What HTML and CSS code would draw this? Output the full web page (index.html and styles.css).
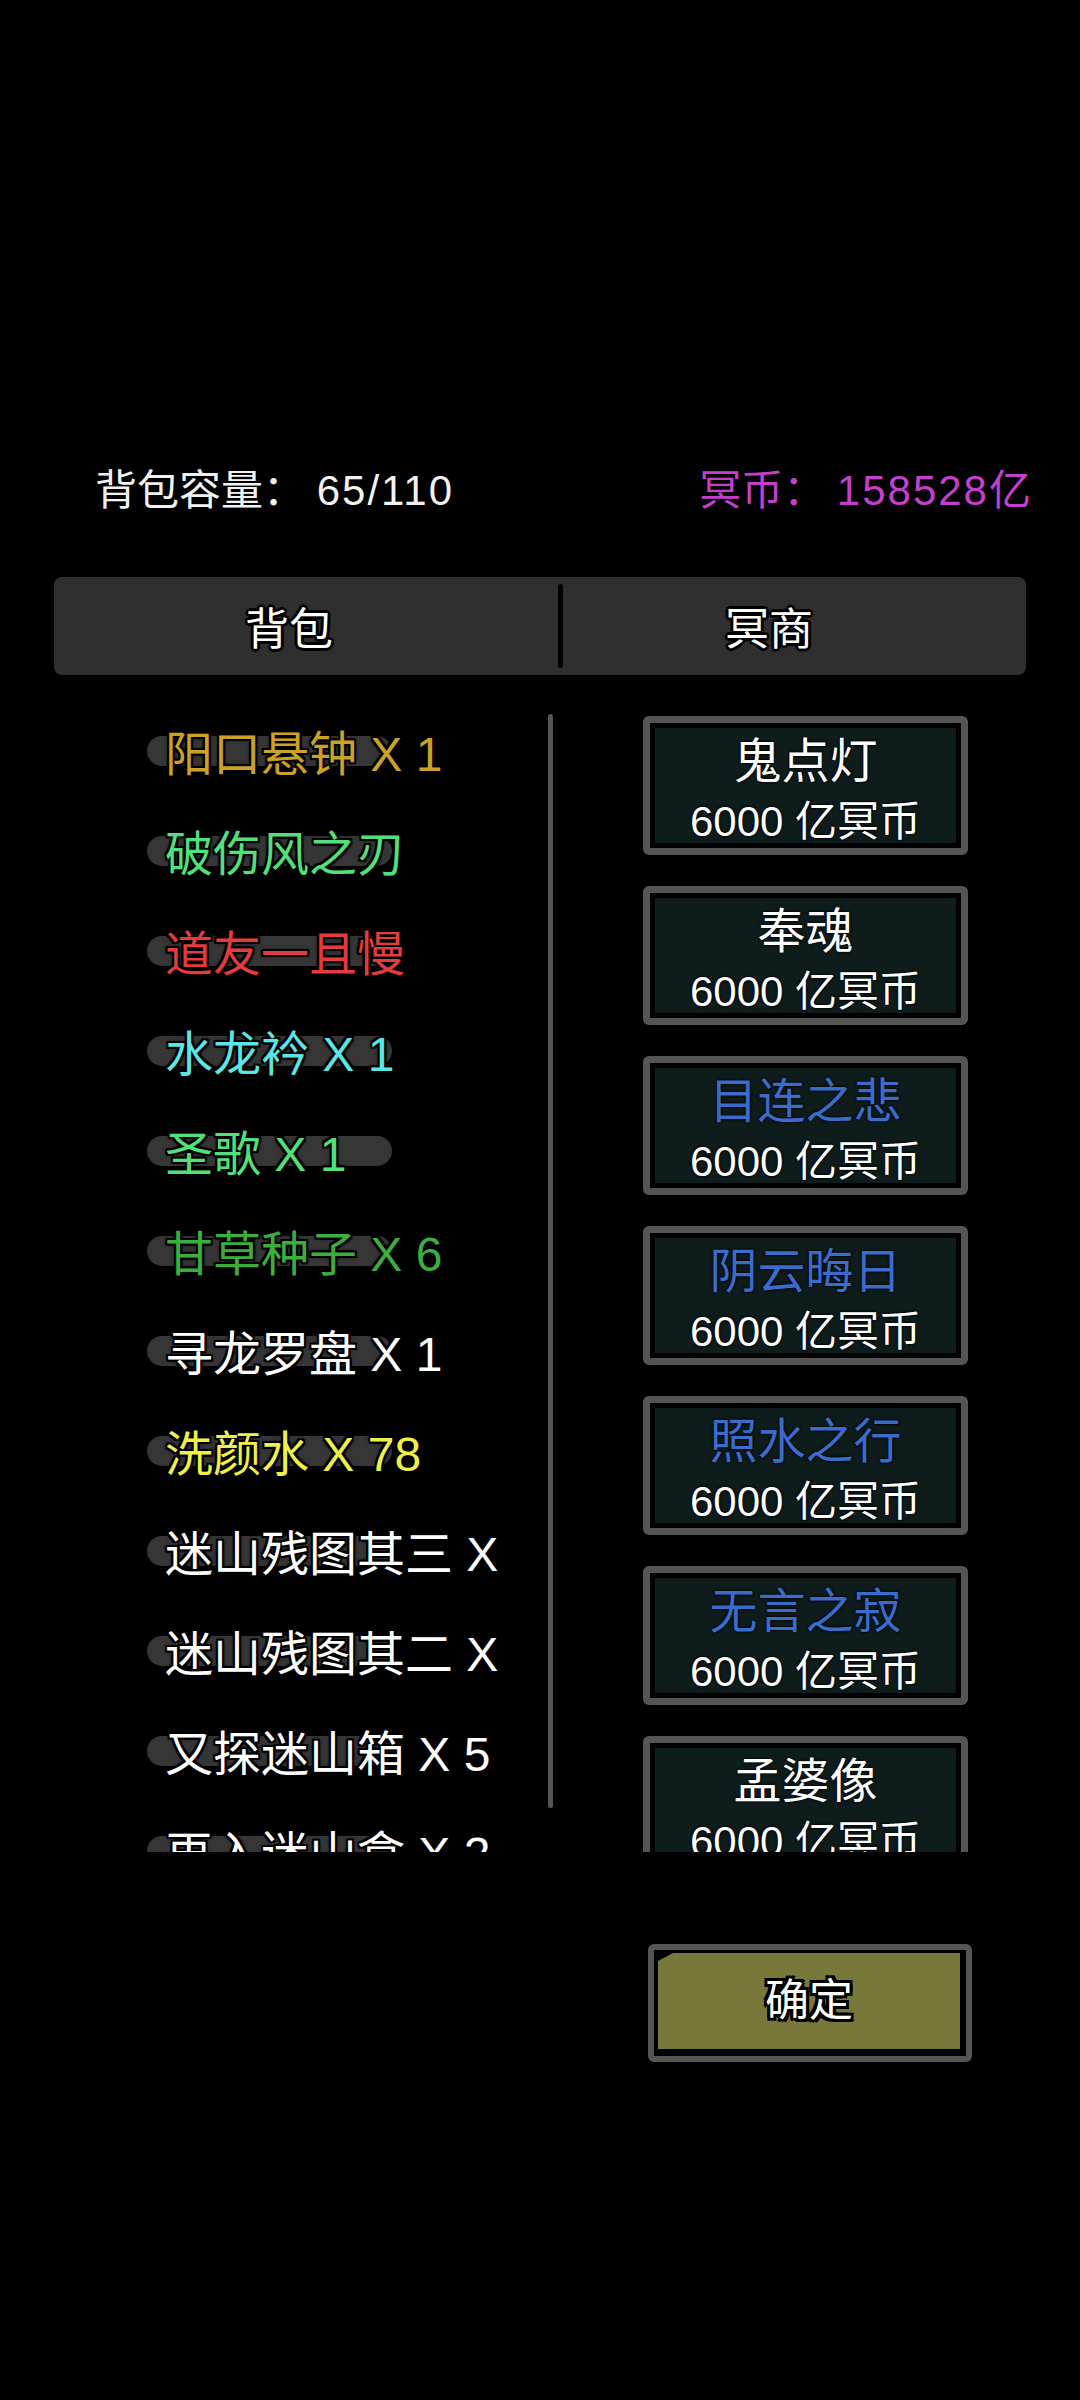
FILE: index.html
```html
<!DOCTYPE html>
<html lang="zh-CN">
<head>
    <meta charset="UTF-8">
    <meta name="viewport" content="width=device-width, initial-scale=1.0">
    <title>背包</title>
    <link rel="stylesheet" href="styles.css">
</head>
<body>

<div class="page">
    <!-- 顶部信息 -->
    <div class="header">
        <span class="capacity">背包容量： <span class="num">65/110</span></span>
        <span class="coins">冥币： <span class="num">158528</span>亿</span>
    </div>

    <!-- 标签 -->
    <div class="tabs">
        <div class="tab tab-left">背包</div>
        <div class="tab-divider"></div>
        <div class="tab tab-right">冥商</div>
    </div>

    <div class="content">
        <!-- 背包列表 -->
        <div class="bag">
            <div class="bag-list">
                <div class="item gold"><span>阳口悬钟 X 1</span></div>
                <div class="item green"><span>破伤风之刃</span></div>
                <div class="item red"><span>道友一且慢</span></div>
                <div class="item cyan"><span>水龙衿 X 1</span></div>
                <div class="item green"><span>圣歌 X 1</span></div>
                <div class="item darkgreen"><span>甘草种子 X 6</span></div>
                <div class="item"><span>寻龙罗盘 X 1</span></div>
                <div class="item yellow"><span>洗颜水 X 78</span></div>
                <div class="item"><span>迷山残图其三 X</span></div>
                <div class="item"><span>迷山残图其二 X</span></div>
                <div class="item"><span>又探迷山箱 X 5</span></div>
                <div class="item"><span>再入迷山盒 X 2</span></div>
            </div>
            <div class="bag-scroll"></div>
        </div>

        <!-- 冥商 -->
        <div class="shop">
            <div class="card"><div class="card-body"><div class="card-title">鬼点灯</div><div class="card-price">6000 亿冥币</div></div></div>
            <div class="card"><div class="card-body"><div class="card-title">奉魂</div><div class="card-price">6000 亿冥币</div></div></div>
            <div class="card"><div class="card-body"><div class="card-title blue">目连之悲</div><div class="card-price">6000 亿冥币</div></div></div>
            <div class="card"><div class="card-body"><div class="card-title blue">阴云晦日</div><div class="card-price">6000 亿冥币</div></div></div>
            <div class="card"><div class="card-body"><div class="card-title blue">照水之行</div><div class="card-price">6000 亿冥币</div></div></div>
            <div class="card"><div class="card-body"><div class="card-title blue">无言之寂</div><div class="card-price">6000 亿冥币</div></div></div>
            <div class="card"><div class="card-body"><div class="card-title">孟婆像</div><div class="card-price">6000 亿冥币</div></div></div>
        </div>
    </div>

    <div class="footer">
        <div class="confirm"><div class="confirm-body">确定</div></div>
    </div>
</div>

</body>
</html>
```

FILE: styles.css
```css
body {
    margin: 0;
    background-color: #000;
    color: #fff;
    font-family: "Liberation Sans", "Noto Sans CJK SC", sans-serif;
}
.page {
    width: 1080px;
    height: 2400px;
    overflow: hidden;
}

/* 顶部信息 */
.header {
    display: flex;
    justify-content: space-between;
    padding: 461px 49px 0 95px;
    height: 60px;
    line-height: 60px;
    font-size: 42px;
}
.capacity {
    color: #f2f2f2;
}
.coins {
    color: #c43fcc;
}
.num {
    letter-spacing: 2px;
}

/* 标签 */
.tabs {
    display: flex;
    align-items: center;
    margin: 56px 54px 0 54px;
    height: 98px;
    background: #2f2f2f;
    border-radius: 8px;
}
.tab {
    text-align: center;
    font-size: 44px;
    text-shadow: -2px -2px 0 #000, 2px -2px 0 #000, -2px 2px 0 #000, 2px 2px 0 #000,
                 0 3px 0 #000, 0 -3px 0 #000, 3px 0 0 #000, -3px 0 0 #000;
}
.tab-left {
    width: 470px;
    padding-right: 34px;
}
.tab-right {
    flex: 1;
    padding-right: 51px;
}
.tab-divider {
    width: 5px;
    height: 84px;
    background: #000;
    border-radius: 3px;
}

/* 内容 */
.content {
    display: flex;
    margin-top: 25px;
    height: 1152px;
    overflow: hidden;
}
.bag {
    display: flex;
    width: 553px;
}
.bag-list {
    width: 401px;
    margin-left: 147px;
    overflow: hidden;
}
.bag-scroll {
    width: 5px;
    height: 1094px;
    margin-top: 14px;
    background: #555;
    border-radius: 3px;
}
.item {
    position: relative;
    display: flex;
    align-items: center;
    height: 100px;
    padding-left: 18px;
    font-size: 48px;
    white-space: nowrap;
    color: #fff;
}
.item::before {
    content: "";
    position: absolute;
    left: 0;
    top: 36px;
    width: 245px;
    height: 30px;
    background: #363636;
    border-radius: 15px;
}
.item span {
    position: relative;
    text-shadow: -2px -2px 0 #000, 2px -2px 0 #000, -2px 2px 0 #000, 2px 2px 0 #000,
                 0 2px 0 #000, 0 -2px 0 #000, 2px 0 0 #000, -2px 0 0 #000, 0 0 5px #000;
}
.gold { color: #c9a227; }
.green { color: #52e07a; }
.red { color: #e23c3c; }
.cyan { color: #5ae6e6; }
.darkgreen { color: #3bae3b; }
.yellow { color: #f0f04a; }

/* 冥商 */
.shop {
    display: flex;
    flex-direction: column;
    gap: 31px;
    margin-left: 90px;
    padding-top: 16px;
    width: 325px;
}
.card {
    flex-shrink: 0;
    border: 7px solid #555;
    border-radius: 6px;
    background: #000;
    padding: 5px;
}
.card-body {
    height: 109px;
    padding-top: 6px;
    background: #0e1c1c;
    text-align: center;
    text-shadow: 0 0 3px #000, 0 0 2px #000;
}
.card-title {
    font-size: 48px;
    line-height: 56px;
}
.card-price {
    margin-top: 5px;
    font-size: 42px;
    line-height: 54px;
}
.blue {
    color: #3a6ccc;
}

/* 确定按钮 */
.footer {
    display: flex;
    justify-content: flex-end;
    padding-right: 108px;
    margin-top: 92px;
}
.confirm {
    width: 302px;
    border: 6px solid #555;
    border-radius: 6px;
    background: #000;
    padding: 3px 6px 7px 4px;
}
.confirm-body {
    height: 96px;
    line-height: 96px;
    background: #78783a;
    clip-path: polygon(0 8px, 15px 0, 100% 0, 100% 100%, 0 100%);
    text-align: center;
    font-size: 44px;
    text-shadow: -3px -3px 0 #000, 3px -3px 0 #000, -3px 3px 0 #000, 3px 3px 0 #000,
                 0 3px 0 #000, 0 -3px 0 #000, 3px 0 0 #000, -3px 0 0 #000;
}
```
